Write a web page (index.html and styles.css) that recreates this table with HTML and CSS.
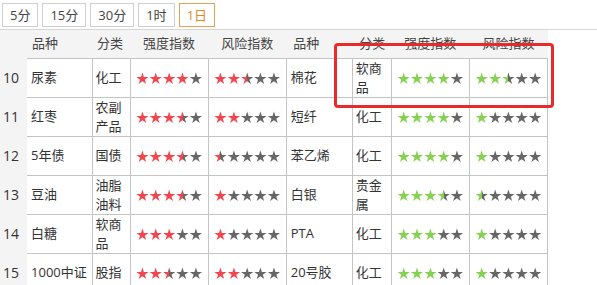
FILE: index.html
```html
<!DOCTYPE html>
<html lang="zh-CN">
<head>
<meta charset="utf-8">
<title>品种指数</title>
<link rel="stylesheet" href="styles.css">
</head>
<body>
<div class="page">
  <div class="toolbar">
    <button class="period">5分</button>
    <button class="period">15分</button>
    <button class="period">30分</button>
    <button class="period">1时</button>
    <button class="period active">1日</button>
  </div>
  <div class="board">
    <table class="grid">
      <colgroup>
        <col class="c-num"><col class="c-name"><col class="c-cat"><col class="c-star"><col class="c-star">
        <col class="c-name2"><col class="c-cat2"><col class="c-star"><col class="c-star">
      </colgroup>
      <thead>
        <tr>
          <th class="num"></th><th class="txt">品种</th><th class="txt">分类</th><th>强度指数</th><th>风险指数</th>
          <th class="txt r">品种</th><th class="txt r">分类</th><th>强度指数</th><th>风险指数</th>
        </tr>
      </thead>
      <tbody>
        <tr>
          <td class="num">10</td><td class="name first">尿素</td><td class="cat">化工</td>
          <td class="stars"><span class="rate red" style="--p:80%">★★★★★</span></td>
          <td class="stars"><span class="rate red" style="--p:50%">★★★★★</span></td>
          <td class="name">棉花</td><td class="cat">软商品</td>
          <td class="stars"><span class="rate green" style="--p:80%">★★★★★</span></td>
          <td class="stars"><span class="rate green" style="--p:50%">★★★★★</span></td>
        </tr>
        <tr>
          <td class="num">11</td><td class="name first">红枣</td><td class="cat">农副产品</td>
          <td class="stars"><span class="rate red" style="--p:70%">★★★★★</span></td>
          <td class="stars"><span class="rate red" style="--p:40%">★★★★★</span></td>
          <td class="name">短纤</td><td class="cat">化工</td>
          <td class="stars"><span class="rate green" style="--p:80%">★★★★★</span></td>
          <td class="stars"><span class="rate green" style="--p:20%">★★★★★</span></td>
        </tr>
        <tr>
          <td class="num">12</td><td class="name first">5年债</td><td class="cat">国债</td>
          <td class="stars"><span class="rate red" style="--p:70%">★★★★★</span></td>
          <td class="stars"><span class="rate red" style="--p:10%">★★★★★</span></td>
          <td class="name">苯乙烯</td><td class="cat">化工</td>
          <td class="stars"><span class="rate green" style="--p:80%">★★★★★</span></td>
          <td class="stars"><span class="rate green" style="--p:20%">★★★★★</span></td>
        </tr>
        <tr>
          <td class="num">13</td><td class="name first">豆油</td><td class="cat">油脂油料</td>
          <td class="stars"><span class="rate red" style="--p:70%">★★★★★</span></td>
          <td class="stars"><span class="rate red" style="--p:20%">★★★★★</span></td>
          <td class="name">白银</td><td class="cat">贵金属</td>
          <td class="stars"><span class="rate green" style="--p:70%">★★★★★</span></td>
          <td class="stars"><span class="rate green" style="--p:10%">★★★★★</span></td>
        </tr>
        <tr>
          <td class="num">14</td><td class="name first">白糖</td><td class="cat">软商品</td>
          <td class="stars"><span class="rate red" style="--p:60%">★★★★★</span></td>
          <td class="stars"><span class="rate red" style="--p:20%">★★★★★</span></td>
          <td class="name">PTA</td><td class="cat">化工</td>
          <td class="stars"><span class="rate green" style="--p:60%">★★★★★</span></td>
          <td class="stars"><span class="rate green" style="--p:20%">★★★★★</span></td>
        </tr>
        <tr>
          <td class="num">15</td><td class="name first">1000中证</td><td class="cat">股指</td>
          <td class="stars"><span class="rate red" style="--p:50%">★★★★★</span></td>
          <td class="stars"><span class="rate red" style="--p:40%">★★★★★</span></td>
          <td class="name">20号胶</td><td class="cat">化工</td>
          <td class="stars"><span class="rate green" style="--p:60%">★★★★★</span></td>
          <td class="stars"><span class="rate green" style="--p:20%">★★★★★</span></td>
        </tr>
      </tbody>
    </table>
    <div class="highlight"></div>
  </div>
</div>
</body>
</html>
```
FILE: styles.css
```css
html, body {
  margin: 0;
  padding: 0;
  background: #fff;
}
body {
  font-family: "Open Sans", "Noto Sans CJK SC", sans-serif;
  font-size: 13px;
  color: #333;
}
.page {
  width: 597px;
  height: 285px;
  overflow: hidden;
}
.toolbar {
  display: flex;
  gap: 4px;
  padding: 3px 0 2px 2px;
  height: 24px;
}
.period {
  height: 24px;
  padding: 0 7px;
  margin: 0;
  border: 1px solid #cfcfcf;
  background: #fff;
  color: #444;
  font-family: "Open Sans", "Noto Sans CJK SC", sans-serif;
  font-size: 13px;
  line-height: 20px;
  border-radius: 0;
}
.period.active {
  border-color: #e3a354;
  color: #e08a2c;
}
.board {
  position: relative;
  border-top: 1px solid #d6d6d6;
}
.grid {
  border-collapse: collapse;
  table-layout: fixed;
  width: 548px;
}
.c-num { width: 27px; }
.c-name { width: 65px; }
.c-cat { width: 38px; }
.c-star { width: 78px; }
.c-name2 { width: 66px; }
.c-cat2 { width: 39px; }
thead tr {
  background: #f4f4f4;
  height: 28px;
}
th {
  font-weight: normal;
  color: #444;
  padding: 0;
  text-align: center;
  line-height: 19px;
  white-space: nowrap;
}
th.txt { text-align: left; padding-left: 5px; }
th.txt.r { padding-left: 7px; }
td {
  border: 1px solid #c4c4c4;
  height: 38px;
  padding: 0 3px;
  line-height: 19px;
  vertical-align: middle;
  color: #333;
}
td.num {
  background: #f4f4f4;
  border: none;
  padding: 0 0 0 3px;
  font-size: 14px;
  color: #333;
}
td.name { padding-left: 4px; white-space: nowrap; }
td.first { border-left: none; }
td.stars {
  text-align: center;
  padding: 0;
}
.rate {
  display: inline-block;
  font-family: "DejaVu Sans", sans-serif;
  font-size: 16px;
  line-height: 16px;
  letter-spacing: -1px;
  padding-right: 1px;
  white-space: nowrap;
  vertical-align: middle;
  color: transparent;
  -webkit-background-clip: text;
  background-clip: text;
}
.rate.red {
  background-image: linear-gradient(to right, #f2464f var(--p), #666 var(--p));
}
.rate.green {
  background-image: linear-gradient(to right, #86d154 var(--p), #666 var(--p));
}
.highlight {
  position: absolute;
  left: 334px;
  top: 13px;
  width: 214px;
  height: 59px;
  border: 3px solid #e72b2b;
  border-radius: 4px;
}
```
